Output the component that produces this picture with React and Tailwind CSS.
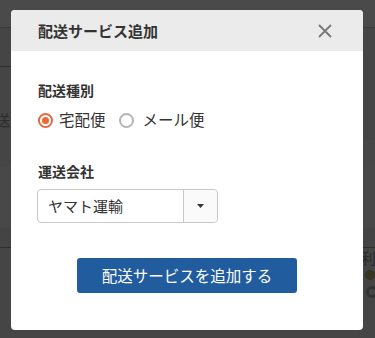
export default function App() {
  return (
    <div
      className="relative w-[375px] h-[338px] overflow-hidden bg-[#454545]"
      style={{ fontFamily: '"Noto Sans CJK JP", "Noto Sans", sans-serif' }}
    >
      {/* faint background page behind overlay */}
      <div className="absolute inset-0 flex flex-col">
        <div className="h-[28px] bg-[#4a4a4a] border-b border-[#3a3a3a]"></div>
        <div className="h-[138px] bg-[#454545] relative">
          <div className="absolute left-0 top-[38px] w-[12px] h-px bg-[#2e2e2e]"></div>
          <div className="absolute left-[-5px] top-[84px] text-[15px] text-[#2a2a2a] leading-none">送サ</div>
          <div className="absolute right-0 top-[112px] w-[14px] h-[26px] bg-[#474747]"></div>
        </div>
        <div className="h-[62px] bg-[#484848]"></div>
        <div className="h-[20px] bg-[#444444] border-b border-[#2e2e2e]"></div>
        <div className="h-[62px] bg-[#454545] relative">
          <div className="absolute left-[361px] top-[2px] text-[15px] text-[#2a2a2a] leading-none">利</div>
          <div className="absolute left-[365px] top-[22px] w-[10px] h-[10px] rounded-full bg-[#3a3520]"></div>
          <div className="absolute left-[366px] top-[38px] w-[12px] h-[12px] rounded-full border-[3px] border-[#333]"></div>
        </div>
        <div className="flex-1 bg-[#454545]"></div>
      </div>

      {/* modal */}
      <div className="absolute left-[11px] top-[10px] w-[352px] h-[320px] bg-white rounded-[4px] overflow-hidden flex flex-col">
        <div className="h-[41px] bg-[#ebebeb] flex items-center justify-between pl-[27px] pr-[31px]">
          <span className="text-[15px] font-bold text-[#333] leading-none">配送サービス追加</span>
          <svg width="14" height="14" viewBox="0 0 14 14" className="text-[#777]">
            <path d="M1 1 L13 13 M13 1 L1 13" stroke="currentColor" strokeWidth="1.8" />
          </svg>
        </div>
        <div className="pl-[27px] pt-[27px] flex flex-col">
          <div className="text-[14px] font-bold text-[#333] leading-[24px]">配送種別</div>
          <div className="flex items-center mt-[6px] h-[24px] text-[15.5px] text-[#333]">
            <span className="w-[15px] h-[15px] rounded-full border-[2px] border-[#e8693b] flex items-center justify-center">
              <span className="w-[7px] h-[7px] rounded-full bg-[#e8693b]"></span>
            </span>
            <span className="ml-[6px]">宅配便</span>
            <span className="ml-[13px] w-[15px] h-[15px] rounded-full border-[2px] border-[#b5b5b5]"></span>
            <span className="ml-[9px]">メール便</span>
          </div>
          <div className="text-[14px] font-bold text-[#333] leading-[24px] mt-[27px]">運送会社</div>
          <div className="mt-[6px] w-[181px] h-[34px] border border-[#c8c8c8] rounded-[4px] flex ml-[-1px]">
            <div className="flex-1 flex items-center pl-[10px] text-[15px] text-[#333]">ヤマト運輸</div>
            <div className="w-[34px] border-l border-[#c8c8c8] bg-[#fafafa] rounded-r-[4px] flex items-center justify-center">
              <svg width="7" height="4" viewBox="0 0 7 4"><path d="M0 0 L7 0 L3.5 4 Z" fill="#333" /></svg>
            </div>
          </div>
        </div>
        <div className="flex justify-center mt-[35px]">
          <button className="w-[220px] h-[35px] bg-[#215c9e] rounded-[3px] text-white text-[15.5px] leading-none">
            配送サービスを追加する
          </button>
        </div>
      </div>
    </div>
  );
}
